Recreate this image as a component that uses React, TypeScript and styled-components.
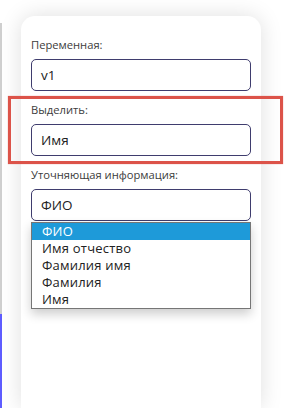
import React from "react";
import styled, { createGlobalStyle } from "styled-components";

const GlobalStyle = createGlobalStyle`
  html, body {
    margin: 0;
    padding: 0;
    background: #ffffff;
    overflow: hidden;
  }
  body {
    font-family: "Open Sans", "Noto Sans", sans-serif;
  }
`;

const Page = styled.div`
  display: flex;
  align-items: flex-start;
  width: 289px;
  height: 408px;
  overflow: hidden;
`;

const SideStrip = styled.div`
  display: flex;
  flex-direction: column;
  align-self: stretch;
  width: 2px;
  margin-top: 23px;
`;

const StripPart = styled.div<{ $color: string; $height?: number }>`
  flex: ${(p) => (p.$height ? `0 0 ${p.$height}px` : "1")};
  background: ${(p) => p.$color};
`;

const Card = styled.div`
  margin-left: 19px;
  margin-top: 16px;
  width: 240px;
  height: 392px;
  box-sizing: border-box;
  padding: 22px 10px 0;
  background: #ffffff;
  border-radius: 14px 14px 0 0;
  box-shadow: 0 0 22px rgba(0, 0, 0, 0.13);
  display: flex;
  flex-direction: column;
`;

const Field = styled.div`
  position: relative;
  display: flex;
  flex-direction: column;
  gap: 7px;
  margin-bottom: 12px;
`;

const Label = styled.label`
  font-size: 11.2px;
  line-height: 14px;
  color: #3c3c3c;
`;

const Input = styled.div`
  box-sizing: border-box;
  height: 32px;
  border: 1px solid #3f3d6e;
  border-radius: 5px;
  padding: 0 9px;
  display: flex;
  align-items: center;
  font-size: 13.5px;
  color: #222222;
`;

const Highlight = styled.div`
  position: absolute;
  top: -7px;
  left: -23px;
  right: -32px;
  bottom: -8px;
  border: 3px solid #dc5349;
  box-shadow: 0 0 1px rgba(220, 83, 73, 0.6);
  pointer-events: none;
`;

const Dropdown = styled.ul`
  position: absolute;
  top: 100%;
  left: 0;
  right: 0;
  margin: 1px 0 0;
  padding: 0;
  list-style: none;
  background: #ffffff;
  border: 1px solid #767676;
  box-shadow: 0 5px 10px rgba(0, 0, 0, 0.2);
`;

const Option = styled.li<{ $selected?: boolean }>`
  height: 17px;
  line-height: 17px;
  padding-left: 10px;
  font-size: 13px;
  letter-spacing: 0.2px;
  color: ${(p) => (p.$selected ? "#ffffff" : "#222222")};
  background: ${(p) => (p.$selected ? "#1e9ad9" : "transparent")};
`;

const options = ["ФИО", "Имя отчество", "Фамилия имя", "Фамилия", "Имя"];

export default function App() {
  return (
    <>
      <GlobalStyle />
      <Page>
        <SideStrip>
          <StripPart $color="#cfcfcf" $height={291} />
          <StripPart $color="#5e5cff" />
        </SideStrip>
        <Card>
          <Field>
            <Label>Переменная:</Label>
            <Input>v1</Input>
          </Field>
          <Field>
            <Highlight />
            <Label>Выделить:</Label>
            <Input>Имя</Input>
          </Field>
          <Field>
            <Label>Уточняющая информация:</Label>
            <Input>ФИО</Input>
            <Dropdown>
              {options.map((o, i) => (
                <Option key={o} $selected={i === 0}>
                  {o}
                </Option>
              ))}
            </Dropdown>
          </Field>
        </Card>
      </Page>
    </>
  );
}
